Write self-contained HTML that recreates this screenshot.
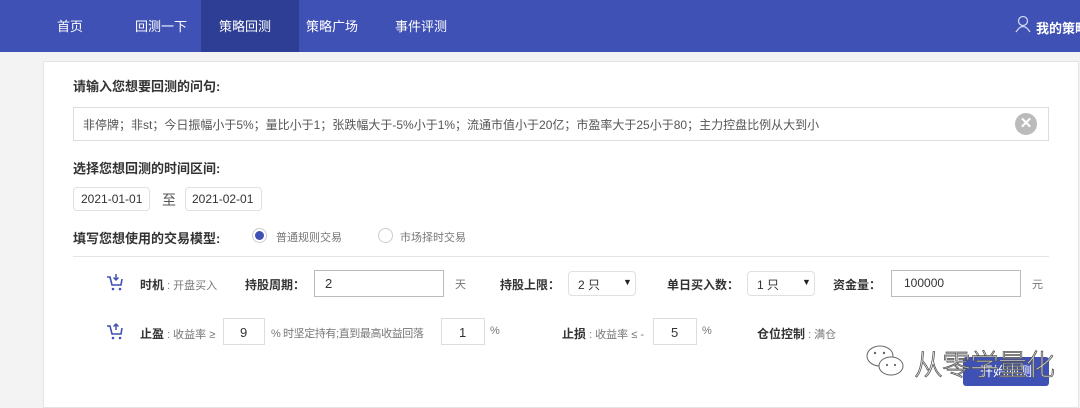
<!DOCTYPE html>
<html><head><meta charset="utf-8"><style>
*{margin:0;padding:0;box-sizing:border-box}
body{width:1080px;height:408px;overflow:hidden;background:#f3f3f3;font-family:"Liberation Sans","Noto Sans CJK SC",sans-serif;font-size:12px;color:#555;position:relative}
.a{position:absolute;white-space:nowrap}
.nav{position:absolute;left:0;top:0;width:1080px;height:52px;background:#3f51b5}
.nav .a{color:#fff;font-size:13px;top:16px}
.card{position:absolute;left:43px;top:61px;width:1036px;height:347px;background:#fff;border:1px solid #e4e4e4}
.b{font-weight:bold;color:#333}
.s{font-size:11px;color:#777}
.box{position:absolute;border:1px solid #ccc;background:#fff}
.sb{position:absolute;border:1px solid #e0e0e0;border-radius:4px;background:#fff}
</style></head><body>
<div class="nav">
<div class="a" style="left:201px;top:0;width:98px;height:52px;background:#2d3e94"></div>
<div class="a" style="left:57px">首页</div>
<div class="a" style="left:135px">回测一下</div>
<div class="a" style="left:219px">策略回测</div>
<div class="a" style="left:306px">策略广场</div>
<div class="a" style="left:395px">事件评测</div>
<svg class="a" style="left:1015px;top:15px" width="16" height="18" viewBox="0 0 16 18"><circle cx="8" cy="6" r="4.5" fill="none" stroke="#cfd4f0" stroke-width="1.3"/><path d="M1 17 Q8 6 15 17" fill="none" stroke="#cfd4f0" stroke-width="1.3"/></svg>
<div class="a" style="left:1036px;top:18px;font-weight:bold">我的策略</div>
</div>
<div class="card"></div>
<div class="a b" style="left:73px;top:76px;font-size:13px">请输入您想要回测的问句:</div>
<div class="box" style="left:73px;top:107px;width:976px;height:34px;border-color:#ddd"></div>
<div class="a" style="left:83px;top:116px;color:#555">非停牌；非st；今日振幅小于5%；量比小于1；张跌幅大于-5%小于1%；流通市值小于20亿；市盈率大于25小于80；主力控盘比例从大到小</div>
<div class="a" style="left:1015px;top:113px;width:22px;height:22px;border-radius:50%;background:#bbb;color:#fff;text-align:center;line-height:22px;font-size:15px;font-weight:bold">✕</div>
<div class="a b" style="left:73px;top:158px;font-size:13px">选择您想回测的时间区间:</div>
<div class="sb" style="left:73px;top:187px;width:77px;height:24px"></div>
<div class="a" style="left:81px;top:192px;color:#333">2021-01-01</div>
<div class="a" style="left:162px;top:190px;font-size:14px">至</div>
<div class="sb" style="left:185px;top:187px;width:77px;height:24px"></div>
<div class="a" style="left:192px;top:192px;color:#333">2021-02-01</div>
<div class="a b" style="left:73px;top:228px;font-size:13px">填写您想使用的交易模型:</div>
<div class="a" style="left:252px;top:228px;width:15px;height:15px;border-radius:50%;border:1px solid #ccc;background:#fff"></div>
<div class="a" style="left:255px;top:231px;width:9px;height:9px;border-radius:50%;background:#3f51b5"></div>
<div class="a s" style="left:276px;top:229px">普通规则交易</div>
<div class="a" style="left:378px;top:228px;width:15px;height:15px;border-radius:50%;border:1px solid #ccc;background:#fff"></div>
<div class="a s" style="left:400px;top:229px">市场择时交易</div>
<div class="a" style="left:73px;top:256px;width:976px;height:1px;background:#e4e4e4"></div>
<svg class="a" style="left:106px;top:273px" width="18" height="18" viewBox="0 0 18 18"><path d="M1 4h3l2 8h9l1-6" fill="none" stroke="#3f51b5" stroke-width="1.6"/><path d="M10 1v6M7.5 4.5L10 7l2.5-2.5" fill="none" stroke="#3f51b5" stroke-width="1.5"/><circle cx="7" cy="16" r="1.3" fill="#3f51b5"/><circle cx="14" cy="16" r="1.3" fill="#3f51b5"/></svg>
<div class="a s" style="left:140px;top:276px"><b style="color:#333;font-size:12px">时机</b> : 开盘买入</div>
<div class="a b" style="left:245px;top:276px">持股周期：</div>
<div class="box" style="left:314px;top:270px;width:130px;height:27px;border-color:#bbb"></div>
<div class="a" style="left:325px;top:276px;color:#333;font-size:13px">2</div>
<div class="a s" style="left:455px;top:276px">天</div>
<div class="a b" style="left:500px;top:276px">持股上限：</div>
<div class="sb" style="left:568px;top:271px;width:68px;height:25px"></div>
<div class="a" style="left:578px;top:276px;color:#333">2 只</div><div class="a" style="left:623px;top:277px;font-size:9px;color:#222">▼</div>
<div class="a b" style="left:667px;top:276px">单日买入数：</div>
<div class="sb" style="left:747px;top:271px;width:68px;height:25px"></div>
<div class="a" style="left:757px;top:276px;color:#333">1 只</div><div class="a" style="left:802px;top:277px;font-size:9px;color:#222">▼</div>
<div class="a b" style="left:833px;top:276px">资金量：</div>
<div class="box" style="left:891px;top:270px;width:130px;height:27px;border-color:#bbb"></div>
<div class="a" style="left:904px;top:276px;color:#333">100000</div>
<div class="a s" style="left:1032px;top:276px">元</div>
<svg class="a" style="left:106px;top:322px" width="18" height="18" viewBox="0 0 18 18"><path d="M1 4h3l2 8h9l1-6" fill="none" stroke="#3f51b5" stroke-width="1.6"/><path d="M10 8V2M7.5 4.5L10 2l2.5 2.5" fill="none" stroke="#3f51b5" stroke-width="1.5"/><circle cx="7" cy="16" r="1.3" fill="#3f51b5"/><circle cx="14" cy="16" r="1.3" fill="#3f51b5"/></svg>
<div class="a s" style="left:140px;top:325px"><b style="color:#333;font-size:12px">止盈</b> : 收益率 ≥</div>
<div class="box" style="left:223px;top:318px;width:42px;height:27px;border-color:#ddd"></div>
<div class="a" style="left:240px;top:325px;color:#333;font-size:13px">9</div>
<div class="a s" style="left:271px;top:325px;letter-spacing:-0.4px">% 时坚定持有;直到最高收益回落</div>
<div class="box" style="left:441px;top:318px;width:44px;height:27px;border-color:#ddd"></div>
<div class="a" style="left:459px;top:325px;color:#333;font-size:13px">1</div>
<div class="a s" style="left:490px;top:325px">%</div>
<div class="a s" style="left:562px;top:325px"><b style="color:#333;font-size:12px">止损</b> : 收益率 ≤ -</div>
<div class="box" style="left:653px;top:318px;width:44px;height:27px;border-color:#ddd"></div>
<div class="a" style="left:671px;top:325px;color:#333;font-size:13px">5</div>
<div class="a s" style="left:702px;top:325px">%</div>
<div class="a s" style="left:757px;top:325px"><b style="color:#333;font-size:12px">仓位控制</b> : 满仓</div>
<div class="a" style="left:963px;top:357px;width:86px;height:29px;background:#3f51b5;border-radius:3px;color:#fff;font-size:13px;text-align:center;line-height:29px">开始回测</div>
<svg class="a" style="left:864px;top:342px" width="44" height="38" viewBox="0 0 44 38"><ellipse cx="16" cy="14" rx="13" ry="10" fill="#fff" stroke="#666" stroke-width="1"/><ellipse cx="27" cy="24" rx="12" ry="9" fill="#fff" stroke="#666" stroke-width="1"/><circle cx="11" cy="11" r="1.2" fill="#666"/><circle cx="20" cy="11" r="1.2" fill="#666"/><circle cx="23" cy="23" r="1.1" fill="#666"/><circle cx="31" cy="23" r="1.1" fill="#666"/></svg>
<div class="a" style="left:914px;top:342px;font-size:29px;font-weight:300;color:#fff;-webkit-text-stroke:0.8px #555;letter-spacing:-1px">从零学量化</div>
</body></html>
